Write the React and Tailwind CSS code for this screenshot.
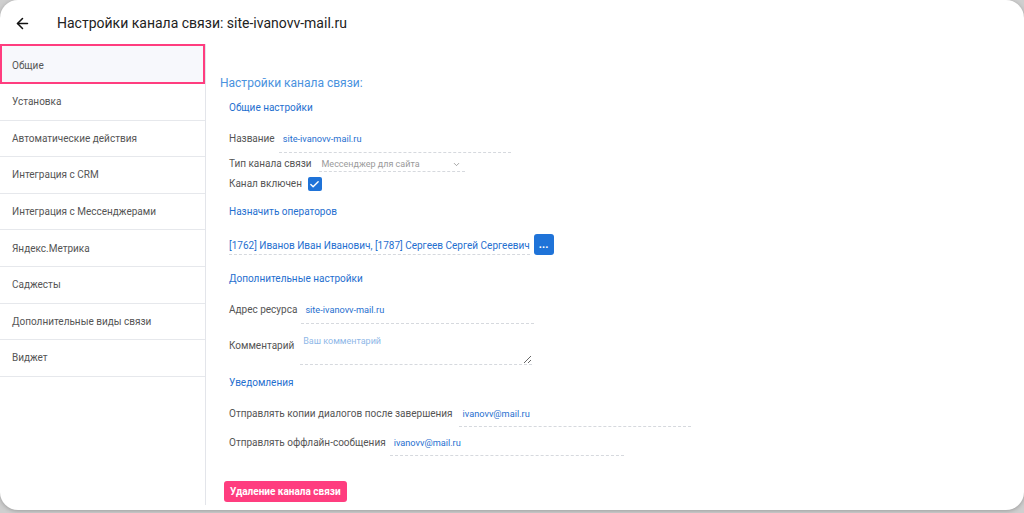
import { ArrowLeft, ChevronDown, Check } from 'lucide-react';

const MENU = [
  'Установка',
  'Автоматические действия',
  'Интеграция с CRM',
  'Интеграция с Мессенджерами',
  'Яндекс.Метрика',
  'Саджесты',
  'Дополнительные виды связи',
  'Виджет',
];

function Field({ value, width, pad = 'pb-[6px]', className = '' }) {
  return (
    <div className={`border-b border-dashed border-[#d6d9de] pl-[4px] ${pad} ${width} ${className}`}>
      <span className="block text-[9.2px] leading-[14px] text-[#1f6fcf]">{value}</span>
    </div>
  );
}

export default function App() {
  return (
    <div className="h-[513px] w-[1024px] overflow-hidden bg-[#cfcfcf] font-['Roboto',sans-serif]">
      <div className="h-[510px] w-[1024px] rounded-[18px] bg-white shadow-[0_1px_4px_rgba(0,0,0,0.25)] overflow-hidden">
        <header className="flex h-[44px] items-center pt-[2px]">
          <ArrowLeft className="ml-[14px] h-[17px] w-[17px] text-[#111]" strokeWidth={2.2} />
          <h1 className="ml-[26px] text-[14px] text-[#222]">Настройки канала связи: site-ivanovv-mail.ru</h1>
        </header>

        <div className="flex h-[461px]">
          <aside className="w-[206px] shrink-0 border-r border-[#e3e5ea]">
            <div className="flex h-[40px] items-center border-2 border-[#ff3d7f] bg-[#f7f8fc] pl-[10px] pt-[2px] text-[10px] text-[#555]">
              Общие
            </div>
            {MENU.map((item) => (
              <div key={item} className="flex h-[36.6px] items-center border-b border-[#e6e8ec] pl-[12px] text-[10px] text-[#555]">
                {item}
              </div>
            ))}
          </aside>

          <main className="flex-1 pl-[14px]">
            <h2 className="mt-[31px] text-[12px] leading-[16px] text-[#4a92de]">Настройки канала связи:</h2>

            <div className="pl-[9px]">
              <h3 className="mt-[10px] text-[10px] leading-[14px] text-[#1f6fcf]">Общие настройки</h3>

              <div className="mt-[13px] flex items-start">
                <span className="pt-[4px] text-[10px] leading-[14px] text-[#555]">Название</span>
                <Field value="site-ivanovv-mail.ru" width="w-[232px]" className="ml-[4px] pt-[4px]" />
              </div>

              <div className="mt-[4px] flex items-start">
                <span className="text-[10px] leading-[14px] text-[#555]">Тип канала связи</span>
                <div className="ml-[7px] flex w-[146px] items-center justify-between border-b border-dashed border-[#d6d9de] pl-[3px] pr-[4px] pt-[1px]">
                  <span className="text-[9px] leading-[13px] text-[#9a9a9a]">Мессенджер для сайта</span>
                  <ChevronDown className="h-[9px] w-[9px] text-[#888]" />
                </div>
              </div>

              <div className="mt-[5px] flex items-center">
                <span className="text-[10px] leading-[14px] text-[#555]">Канал включен</span>
                <span className="ml-[6px] flex h-[14px] w-[14px] items-center justify-center rounded-[2px] bg-[#1f73d8]">
                  <Check className="h-[11px] w-[11px] text-white" strokeWidth={3} />
                </span>
              </div>

              <h3 className="mt-[14px] text-[10px] leading-[14px] text-[#1f6fcf]">Назначить операторов</h3>

              <div className="mt-[15px] flex items-end">
                <div className="border-b border-dashed border-[#d6d9de] pb-[1px]">
                  <span className="block text-[10px] leading-[14px] text-[#1f6fcf]">
                    [1762] Иванов Иван Иванович, [1787] Сергеев Сергей Сергеевич
                  </span>
                </div>
                <button className="ml-[4px] flex h-[21px] w-[20px] items-center justify-center rounded-[3px] bg-[#1f73d8] text-[11px] font-bold leading-none text-white">
                  ...
                </button>
              </div>

              <h3 className="mt-[17px] text-[10px] leading-[14px] text-[#1f6fcf]">Дополнительные настройки</h3>

              <div className="mt-[17px] flex items-start">
                <span className="text-[10px] leading-[14px] text-[#555]">Адрес ресурса</span>
                <Field value="site-ivanovv-mail.ru" width="w-[233px]" className="ml-[4px]" />
              </div>

              <div className="mt-[10px] flex items-start">
                <span className="pt-[5px] text-[10px] leading-[14px] text-[#555]">Комментарий</span>
                <textarea
                  placeholder="Ваш комментарий"
                  className="ml-[6px] h-[31px] w-[232px] resize-y border-0 border-b border-dashed border-[#d6d9de] bg-transparent px-[3px] pt-0 text-[9px] leading-[14px] text-[#1f6fcf] outline-none placeholder:text-[#8fb8e8]"
                />
              </div>

              <h3 className="mt-[11px] text-[10px] leading-[14px] text-[#1f6fcf]">Уведомления</h3>

              <div className="mt-[17px] flex items-start">
                <span className="text-[10px] leading-[14px] text-[#555]">Отправлять копии диалогов после завершения</span>
                <Field value="ivanovv@mail.ru" width="w-[232px]" pad="pb-[5px]" className="ml-[6px]" />
              </div>

              <div className="mt-[9px] flex items-start">
                <span className="text-[10px] leading-[14px] text-[#555]">Отправлять оффлайн-сообщения</span>
                <Field value="ivanovv@mail.ru" width="w-[234px]" pad="pb-[5px]" className="ml-[4px]" />
              </div>
            </div>

            <button className="ml-[4px] mt-[25px] h-[21px] rounded-[3px] bg-[#ff3d7f] px-[6px] text-[10px] font-bold leading-[21px] text-white">
              Удаление канала связи
            </button>
          </main>
        </div>
      </div>
    </div>
  );
}
